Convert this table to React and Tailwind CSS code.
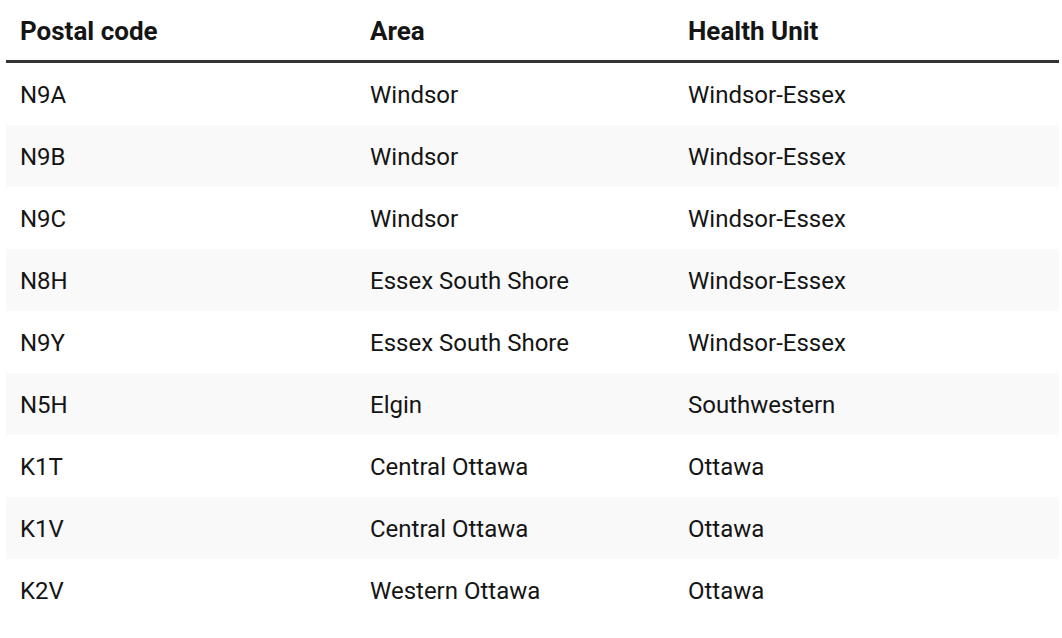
export default function App() {
  const rows = [
    ["N9A", "Windsor", "Windsor-Essex"],
    ["N9B", "Windsor", "Windsor-Essex"],
    ["N9C", "Windsor", "Windsor-Essex"],
    ["N8H", "Essex South Shore", "Windsor-Essex"],
    ["N9Y", "Essex South Shore", "Windsor-Essex"],
    ["N5H", "Elgin", "Southwestern"],
    ["K1T", "Central Ottawa", "Ottawa"],
    ["K1V", "Central Ottawa", "Ottawa"],
    ["K2V", "Western Ottawa", "Ottawa"],
  ];
  return (
    <div className="w-[1062px] h-[638px] bg-white pl-[6px]" style={{ fontFamily: "Roboto, 'Noto Sans', sans-serif" }}>
      <table className="w-[1053px] border-separate border-spacing-0 text-[#151515] table-fixed">
        <colgroup>
          <col className="w-[350px]" />
          <col className="w-[318px]" />
          <col className="w-[385px]" />
        </colgroup>
        <thead>
          <tr>
            <th className="h-[63px] border-b-[3px] border-[#333333] text-left font-bold text-[26px] pl-[14px] pt-[2px] align-middle">Postal code</th>
            <th className="h-[63px] border-b-[3px] border-[#333333] text-left font-bold text-[26px] pl-[14px] pt-[2px] align-middle">Area</th>
            <th className="h-[63px] border-b-[3px] border-[#333333] text-left font-bold text-[26px] pl-[14px] pt-[2px] align-middle">Health Unit</th>
          </tr>
        </thead>
        <tbody>
          {rows.map((r, i) => (
            <tr key={i} className={i % 2 === 1 ? "bg-[#f9f9f9]" : "bg-white"}>
              {r.map((c, j) => (
                <td key={j} className="h-[62px] pl-[14px] pt-[2px] text-[24px] align-middle">{c}</td>
              ))}
            </tr>
          ))}
        </tbody>
      </table>
    </div>
  );
}
